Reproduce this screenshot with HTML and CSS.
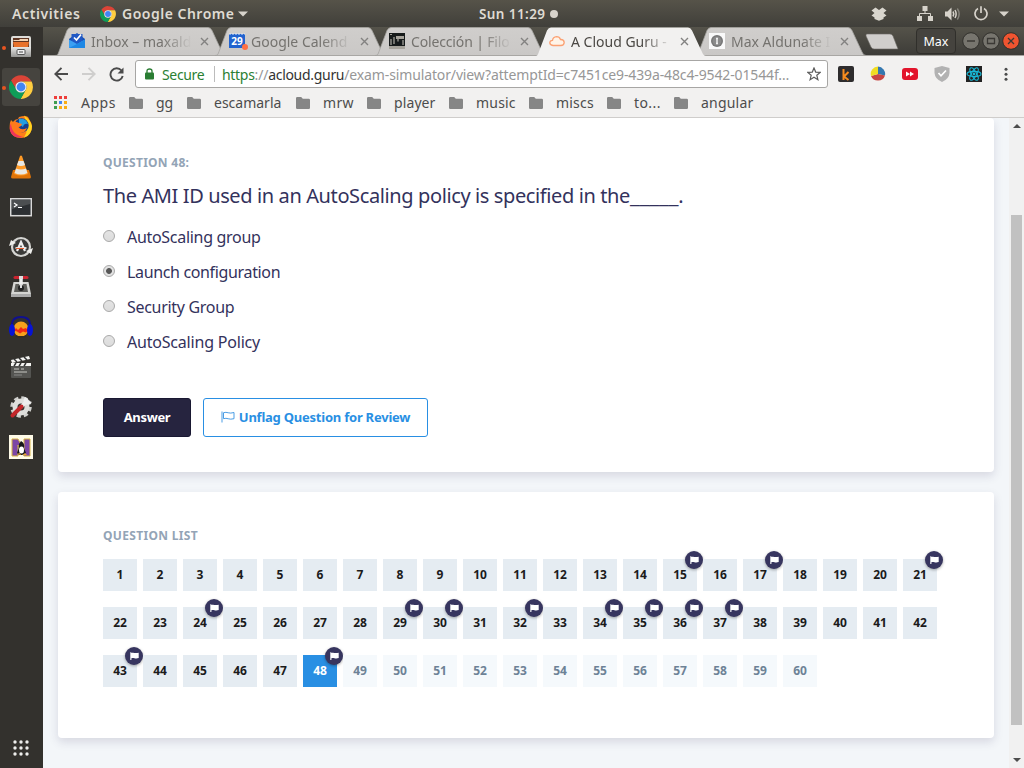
FILE: index.html
```html
<!DOCTYPE html>
<html lang="en">
<head>
<meta charset="utf-8">
<title>A Cloud Guru - Exam Simulator</title>
<link rel="stylesheet" href="styles.css">
</head>
<body>
<svg class="defs" width="0" height="0">
  <defs>
    <linearGradient id="inactive" x1="0" y1="0" x2="0" y2="1"><stop offset="0" stop-color="#d0cecc"/><stop offset="1" stop-color="#cac8c6"/></linearGradient>
    <linearGradient id="metal" x1="0" y1="0" x2="0" y2="1"><stop offset="0" stop-color="#e8e8e6"/><stop offset="1" stop-color="#969694"/></linearGradient>
    <symbol id="chrome" viewBox="0 0 24 24">
      <path fill="#db4437" d="M2 5.6A12 12 0 0 1 22.6 6.5H12A5.5 5.5 0 0 0 6.9 14Z"/>
      <path fill="#ffcd40" d="M22.6 6.5A12 12 0 0 1 11.6 24L16.8 14.8A5.5 5.5 0 0 0 12 6.5Z"/>
      <path fill="#0f9d58" d="M2 5.4A12 12 0 0 0 11.6 24L16.8 14.7A5.5 5.5 0 0 1 7.2 14.7Z"/>
      <circle cx="12" cy="12" r="5.6" fill="#f1f1f1"/><circle cx="12" cy="12" r="4.4" fill="#4285f4"/>
    </symbol>
    <symbol id="folder" viewBox="0 0 14 12"><path fill="#868686" d="M1.3 0H5.2L6.8 1.7H12.7Q14 1.7 14 3V10.7Q14 12 12.7 12H1.3Q0 12 0 10.7V1.3Q0 0 1.3 0Z"/></symbol>
    <symbol id="close" viewBox="0 0 9 9"><path d="M1 1 8 8M8 1 1 8" stroke="#838281" stroke-width="1.4"/></symbol>
    <symbol id="tab" viewBox="0 0 172 29"><path d="M0 28.5C3 28.5 3 27 4 24.500L12 3.500Q13.500 .5 16 .5H153Q155.500 .5 157 3.500L167 25Q168.500 28.500 171 28.500Z" fill="url(#inactive)" stroke="#a5a39f" stroke-width=".8"/></symbol>
    <symbol id="flag" viewBox="0 0 9 8"><path fill="#fff" d="M.3.2H1.300V.9C3.500.2 4.500 1.700 8.700.7V6C5 7.200 4 5.300 1.400 6.200V8H.3Z"/></symbol>
  </defs>
</svg>
<div class="desktop">
  <header class="panel">
    <span class="activities">Activities</span>
    <svg class="app-ico" width="16" height="16"><use href="#chrome"/></svg>
    <span class="app-name">Google Chrome</span>
    <svg class="caret" width="10" height="6" viewBox="0 0 10 6"><path d="M0 .5H10L5 5.500Z" fill="#d7d3cb"/></svg>
    <span class="clock">Sun 11:29</span><i class="dot"></i>
    <svg class="dropbox" width="16" height="14" viewBox="0 0 16 14"><path fill="#d9d6ce" d="M4.500.5 8 3 11.500.5 15.500 3.500 12.500 6 15.500 8.500 12.500 10.500V12L8 13.800 3.500 12V10.500L.5 8.500 3.500 6 .5 3.500Z"/></svg>
    <svg class="net" width="16" height="15" viewBox="0 0 16 15"><path fill="#d7d3cb" d="M5.500 0h5v5h-5zM0 10h5v5H0zM11 10h5v5h-5z"/><path d="M8 5V7.500M2.500 10V7.500H13.500V10" fill="none" stroke="#d7d3cb"/></svg>
    <svg class="vol" width="16" height="14" viewBox="0 0 16 14"><path fill="#d7d3cb" d="M0 4.500H2.500L6.500.5V13.500L2.500 9.500H0Z"/><path d="M8 4.500Q9.500 7 8 9.500M10 3Q12.300 7 10 11" fill="none" stroke="#d7d3cb" stroke-width="1.500"/><path d="M12.300 1.500Q16 7 12.300 12.500" fill="none" stroke="#85837b" stroke-width="1.500"/></svg>
    <svg class="power" width="14" height="15" viewBox="0 0 14 15"><path d="M4 2.500A6 6 0 1 0 10 2.500M7 .3V7" fill="none" stroke="#d7d3cb" stroke-width="1.700"/></svg>
    <svg class="caret2" width="10" height="6" viewBox="0 0 10 6"><path d="M0 .5H10L5 5.500Z" fill="#d7d3cb"/></svg>
  </header>
  <div class="workspace">
    <nav class="dock">
      <div class="app running"><svg width="22" height="24" viewBox="0 0 22 24"><rect x="1" y="1" width="20" height="21" rx="2" fill="#deddd9"/><rect x="3" y="3" width="16" height="9" fill="#5f3522"/><path d="M3.500 5H9L10 4H18V6H3.500Z" fill="#f4d3b3"/><path d="M3 7H19L18 12H4Z" fill="#e8722b"/><rect x="1" y="12" width="20" height="10" rx="1" fill="url(#metal)"/><rect x="7" y="14.500" width="8" height="5" rx="1" fill="#eee" stroke="#555"/><path d="M9 17H13" stroke="#444"/></svg></div>
      <div class="app running current"><svg width="24" height="24"><use href="#chrome"/></svg></div>
      <div class="app"><svg width="24" height="24" viewBox="0 0 24 24"><path fill="#ff7f18" d="M2 5 4 7Q6 4 9 4L10 2Q19-1 20 4Q24 9 22.500 15Q20 23 12 23Q3 23 1 15Q0 9 2 5Z"/><path fill="#ffd51f" d="M15 .5Q21 4 23 11Q23 20 15 22.500Q21 13 15 .5Z"/><circle cx="12.500" cy="10.500" r="7.200" fill="#14408f"/><path fill="#229ee0" d="M10 4Q17 3 19 9Q15 8 14 12L10 9Z"/><path fill="#ff7a1c" d="M3 7Q6 6 10 8L13 9Q12 12 9.500 12Q12 16 18 13Q15 20 8 17Q3 15 3 7Z"/><path fill="#f0355a" d="M2 8Q2 15 7 19Q10 21 14 22Q6 24 2 18Q-.5 14 2 8Z"/></svg></div>
      <div class="app"><svg width="22" height="24" viewBox="0 0 22 24"><path fill="#e07408" d="M3 15H19L21 22Q21 23.500 19 23.500H3Q1 23.500 1 22Z"/><path fill="#ff9a26" d="M10 1Q11 0 12 1L18 19Q11 22 4 19Z"/><path fill="#e9e8e4" d="M8.500 6H13.500L15 10Q11 12 7 10ZM6 13.500Q11 15.500 16 13.500L17.400 18Q11 21 4.600 18Z"/></svg></div>
      <div class="app"><svg width="22" height="19" viewBox="0 0 22 19"><rect x=".7" y=".7" width="20.600" height="17" fill="#2d3033" stroke="#d9d9d9" stroke-width="1.500"/><path fill="#4c4f51" d="M2 2H20V6L2 11Z"/><path d="M4 5 7 7 4 9M8 9.500H12" fill="none" stroke="#fff" stroke-width="1.200"/></svg></div>
      <div class="app"><svg width="24" height="24" viewBox="0 0 24 24"><circle cx="12" cy="12" r="9" fill="#3b3b39" stroke="#d5d5d2" stroke-width="2.200"/><path d="M0 11 2 5 7 8ZM24 13 22 19 17 16Z" fill="#eeeeeb"/><path d="M8 16 12 7 16 16" fill="none" stroke="#eee" stroke-width="2.200"/><path d="M6.500 13H17.500" stroke="#eee" stroke-width="1.800"/><path d="M7 13.500H15" stroke="#e65a2c"/></svg></div>
      <div class="app"><svg width="22" height="24" viewBox="0 0 22 24"><path fill="#d5d5d2" d="M3.500 7H18.500L21 19V22H1V19Z"/><path fill="#5f5f5b" d="M5.500 9H16.500L18 17H4Z"/><path fill="#aaa" d="M1 19H21V22H1Z"/><path d="M11 2V13" stroke="#eee" stroke-width="3.500"/><circle cx="11" cy="13" r="3" fill="#222"/><path d="M11 9V13" stroke="#ddd" stroke-width="2"/><path d="M5 2.500H17" stroke="#ca2430" stroke-width="3" stroke-linecap="round"/><path d="M9 2.500H13" stroke="#ddd" stroke-width="3"/></svg></div>
      <div class="app"><svg width="24" height="22" viewBox="0 0 24 22"><path d="M3 11Q2 1 12 1T21 11" fill="none" stroke="#10108f" stroke-width="2"/><circle cx="12" cy="13" r="7.500" fill="#f5a11c"/><path d="M5 14.500 7 12 9 14 12 11 14 13 17 12 19 14.500 17 16.500 14 15.500 11 17.500 8 15.500Z" fill="#f02816"/><ellipse cx="3" cy="14" rx="3" ry="6" fill="#0713d5"/><ellipse cx="21" cy="14" rx="3" ry="6" fill="#0713d5"/><path d="M6 20H18L16 21.500H8Z" fill="#332d20"/></svg></div>
      <div class="app"><svg width="22" height="23" viewBox="0 0 22 23"><rect x="1" y="10" width="20" height="12" rx="1" fill="#545451"/><path d="M1 7H21V10H1Z" fill="#f5f5f2"/><path d="M1 4 19 0 20 3 2 7Z" fill="#f5f5f2"/><path d="M4 3 7 6M9 2 12 5M14 1 17 4M6 7 4 10M11 7 9 10M16 7 14 10" stroke="#333" stroke-width="1.500"/><path d="M4 13H9M11 13H14M4 16H17" stroke="#c7c7c3"/><path d="M4 19H12" stroke="#888"/></svg></div>
      <div class="app"><svg width="24" height="24" viewBox="0 0 24 24"><circle cx="12" cy="12" r="9" fill="none" stroke="#d0d0cd" stroke-width="3.500" stroke-dasharray="4.200 2.870"/><circle cx="12" cy="12" r="6" fill="none" stroke="#dededb" stroke-width="5"/><path d="M12 12 18 6" stroke="#eee" stroke-width="3.500"/><path d="M16 2Q13 6 16 9Q20 11 23 7L20 6 18.500 3Z" fill="#eee"/><path d="M3.500 20.500 12.500 11.500" stroke="#c3272b" stroke-width="4" stroke-linecap="round"/></svg></div>
      <div class="app"><svg width="24" height="24" viewBox="0 0 24 24"><rect width="24" height="24" fill="#fffbe8"/><path d="M3 4H9L15 15V4H21V21H15L9 10V21H3Z" fill="#7c46a5" stroke="#d7b443"/><path d="M12 6Q16 8 15 13L17 18 13 20H10L8 18Q10 14 10 9Z" fill="#17171a"/><ellipse cx="12.500" cy="15" rx="2.500" ry="3.500" fill="#fff"/><path d="M8 19 11 18 12 20ZM14 20 16 18 18 20Z" fill="#e9a52c"/></svg></div>
      <svg class="launcher" width="16" height="16" viewBox="0 0 16 16" fill="#eeeeec"><circle cx="2" cy="2" r="1.700"/><circle cx="8" cy="2" r="1.700"/><circle cx="14" cy="2" r="1.700"/><circle cx="2" cy="8" r="1.700"/><circle cx="8" cy="8" r="1.700"/><circle cx="14" cy="8" r="1.700"/><circle cx="2" cy="14" r="1.700"/><circle cx="8" cy="14" r="1.700"/><circle cx="14" cy="14" r="1.700"/></svg>
    </nav>
    <main class="window">
      <div class="tabstrip">
        <div class="tab"><svg class="shape"><use href="#tab"/></svg><svg class="fav" width="16" height="16" viewBox="0 0 16 16"><path fill="#1550b5" d="M0 6 8 0 16 6V12H0Z"/><path fill="#2058c4" d="M2.500 1H13.500V9L8 12 2.500 9Z"/><path d="M5 4.500 7.500 7 12 1.500" fill="none" stroke="#fff" stroke-width="1.700"/><path fill="#3ba0f3" d="M0 6.500 8 11 16 6.500V15H0Z"/><path fill="#1e88e5" d="M0 15 8 11 16 6.500V15Z"/></svg><span class="title t1">Inbox – maxald</span><svg class="x" width="9" height="9"><use href="#close"/></svg></div>
        <div class="tab"><svg class="shape"><use href="#tab"/></svg><svg class="fav tall" width="19" height="18" viewBox="0 0 19 18"><rect y="2" width="16" height="14" fill="#2163cf"/><path d="M0 2H16" stroke="#dfe9f8" stroke-dasharray="2 1"/><text x="8" y="13" text-anchor="middle" class="cal">29</text><circle cx="16" cy="15" r="3" fill="#ff7043"/></svg><span class="title t2">Google Calend</span><svg class="x" width="9" height="9"><use href="#close"/></svg></div>
        <div class="tab"><svg class="shape"><use href="#tab"/></svg><svg class="fav" width="16" height="16" viewBox="0 0 16 16"><rect width="16" height="16" fill="#171b1b"/><path fill="#a7a49c" d="M0 13H16V16H0ZM7 3H15V6H7ZM1 1H3V2H1Z"/><path d="M2 6V12M5 4V11M9 6V9M14 7V12" stroke="#ccc9c0"/><path d="M8 10H13" stroke="#15191b" stroke-width="3"/></svg><span class="title t3">Colección | Filo</span><svg class="x" width="9" height="9"><use href="#close"/></svg></div>
        <div class="tab last"><svg class="shape"><use href="#tab"/></svg><svg class="fav" width="16" height="16" viewBox="0 0 16 16"><rect width="16" height="16" fill="#f9f9f9"/><circle cx="8" cy="8" r="6" fill="#777"/><circle cx="8" cy="8" r="4.500" fill="#8a8a8a"/><path d="M8 5V11M7 5.500H9M7 10.500H9" stroke="#eee" stroke-width="1.500"/></svg><span class="title t5">Max Aldunate I</span><svg class="x" width="9" height="9"><use href="#close"/></svg></div>
        <div class="tab active"><svg class="shape" viewBox="0 0 172 29"><path d="M0 29C3 29 3 27 4 24.500L12 3.500Q13.500 .5 16 .5H153Q155.500 .5 157 3.500L167 25Q168.500 29 171 29Z" fill="#f2f1f0"/></svg><svg class="fav" width="16" height="16" viewBox="0 0 16 16"><path d="M4 12.500Q.7 12 .8 9.500Q1 7.500 3.500 7.300Q4 4 7.500 3.700Q10.500 3.700 11.500 6.500Q15 6.300 15.200 9.500Q15 12.500 12 12.500Z" fill="#fff4e8" stroke="#fba173" stroke-width="1.300"/></svg><span class="title t4">A Cloud Guru -</span><svg class="x" width="9" height="9"><use href="#close"/></svg></div>
        <svg class="newtab" width="34" height="17" viewBox="0 0 34 17"><path d="M2 1H25Q27 1 28 3L33 16H9Q7 16 6 14L1 3Q.5 1 2 1Z" fill="#d0cecc" stroke="#6c6a65" stroke-width=".6"/></svg>
        <div class="user">Max</div>
        <svg class="wm" width="58" height="18" viewBox="0 0 58 18"><g stroke="#31302c"><circle cx="9" cy="9" r="8.300" fill="#77756e"/><circle cx="29" cy="9" r="8.300" fill="#77756e"/><circle cx="49" cy="9" r="8.300" fill="#f05430"/></g><path d="M5 9H13M25.500 6.500H32.500V11.500H25.500ZM46 6 52 12M52 6 46 12" fill="none" stroke="#3b3935" stroke-width="1.300"/></svg>
      </div>
      <div class="toolbar">
        <svg class="back" width="14" height="14" viewBox="0 0 14 14"><path d="M14 7H1.500M7.500 .8 1.300 7 7.500 13.200" fill="none" stroke="#4b4b4b" stroke-width="1.900"/></svg>
        <svg class="fwd" width="14" height="14" viewBox="0 0 14 14"><path d="M0 7H12.500M6.500 .8 12.700 7 6.500 13.200" fill="none" stroke="#cfcecd" stroke-width="1.900"/></svg>
        <svg class="reload" width="15" height="15" viewBox="0 0 15 15"><path d="M12.500 3.500A6.200 6.200 0 1 0 13.700 9" fill="none" stroke="#4b4b4b" stroke-width="1.900"/><path d="M14.500 .5V6.500H8.500Z" fill="#4b4b4b"/></svg>
        <div class="omnibox">
          <svg class="lock" width="9" height="12" viewBox="0 0 9 12"><path d="M2 5V3Q2 1 4.500 1T7 3V5" fill="none" stroke="#2a7d33" stroke-width="1.300"/><rect y="4.500" width="9" height="7" rx="1" fill="#2a7d33"/></svg>
          <span class="secure">Secure</span><i class="sep"></i>
          <span class="url"><span class="https">https</span><span class="dim">://</span><span class="host">acloud.guru</span><span class="dim path">/exam-simulator/view?attemptId=c7451ce9-439a-48c4-9542-01544f…</span></span>
          <svg class="star" width="14" height="14" viewBox="0 0 14 14"><path d="M7 1 8.700 5.100 13.200 5.400 9.800 8.300 10.900 12.700 7 10.300 3.100 12.700 4.200 8.300.8 5.400 5.300 5.100Z" fill="none" stroke="#5b5b5b" stroke-width="1.200"/></svg>
        </div>
        <div class="exts">
          <svg width="16" height="16" viewBox="0 0 16 16"><rect width="16" height="16" rx="2" fill="#2e2c2d"/><path d="M5.500 3V14M10.500 6 6 10.500 10.500 14" fill="none" stroke="#f68b1e" stroke-width="2"/></svg>
          <svg width="16" height="16" viewBox="0 0 16 16"><path d="M8 8V.5A7.500 7.500 0 0 1 15 9.500Z" fill="#3578b0"/><path d="M8 8 15 9.500A7.500 7.500 0 0 1 1 10Z" fill="#c84643"/><path d="M8 8 1 10A7.500 7.500 0 0 1 8 .5Z" fill="#f0dc22"/></svg>
          <svg width="16" height="16" viewBox="0 0 16 16"><rect y="2" width="16" height="12" rx="3" fill="#e2142c"/><path d="M4 5.500 8 8 4 10.500ZM8 5.500 12 8 8 10.500Z" fill="#fff"/></svg>
          <svg width="16" height="16" viewBox="0 0 16 16"><path d="M8 0 15.500 2V7Q15 13 8 16Q1 13 .5 7V2Z" fill="#b2b2b2"/><path d="M4.500 7 7 9.800 12 4.500" fill="none" stroke="#fff" stroke-width="1.700"/></svg>
          <svg width="16" height="16" viewBox="0 0 16 16"><rect width="16" height="16" fill="#222"/><g fill="none" stroke="#18b8d6" stroke-width="1.100"><ellipse cx="8" cy="8" rx="7" ry="2.600"/><ellipse cx="8" cy="8" rx="7" ry="2.600" transform="rotate(60 8 8)"/><ellipse cx="8" cy="8" rx="7" ry="2.600" transform="rotate(120 8 8)"/></g><circle cx="8" cy="8" r="1.400" fill="#18b8d6"/></svg>
          <svg width="16" height="16" viewBox="0 0 16 16" fill="#4b4b4b"><circle cx="8" cy="3.200" r="1.500"/><circle cx="8" cy="8.200" r="1.500"/><circle cx="8" cy="13.200" r="1.500"/></svg>
        </div>
      </div>
      <div class="bookmarks">
        <svg class="apps" width="14" height="14" viewBox="0 0 14 14"><path fill="#ee3e3a" d="M0 0h3v3H0zM5 0h3v3H5zM10 0h3v3h-3z"/><path fill="#3f9d51" d="M0 5h3v3H0zM0 10h3v3H0z"/><path fill="#4285f4" d="M5 5h3v3H5z"/><path fill="#f9ad15" d="M10 5h3v3h-3zM5 10h3v3H5zM10 10h3v3h-3z"/></svg>
        <span class="b0">Apps</span>
        <span class="bm b1"><svg width="14" height="12"><use href="#folder"/></svg><span>gg</span></span>
        <span class="bm b2"><svg width="14" height="12"><use href="#folder"/></svg><span>escamarla</span></span>
        <span class="bm b3"><svg width="14" height="12"><use href="#folder"/></svg><span>mrw</span></span>
        <span class="bm b4"><svg width="14" height="12"><use href="#folder"/></svg><span>player</span></span>
        <span class="bm b5"><svg width="14" height="12"><use href="#folder"/></svg><span>music</span></span>
        <span class="bm b6"><svg width="14" height="12"><use href="#folder"/></svg><span>miscs</span></span>
        <span class="bm b7"><svg width="14" height="12"><use href="#folder"/></svg><span class="dots">to...</span></span>
        <span class="bm b8"><svg width="14" height="12"><use href="#folder"/></svg><span>angular</span></span>
      </div>
      <div class="viewport">
        <div class="page">
          <section class="card question">
            <h2 class="label l1">QUESTION 48:</h2>
            <p class="prompt"><span>The AMI ID used in an AutoScaling policy is specified in the</span><span class="blank">_____</span>.</p>
            <div class="option"><i class="radio"></i><span>AutoScaling group</span></div>
            <div class="option"><i class="radio on"></i><span class="o2">Launch configuration</span></div>
            <div class="option"><i class="radio"></i><span>Security Group</span></div>
            <div class="option"><i class="radio"></i><span class="o4">AutoScaling Policy</span></div>
            <div class="actions">
              <div class="btn answer">Answer</div>
              <div class="btn unflag"><svg width="14" height="12" viewBox="0 0 14 12"><path d="M1 .5V11.500M2.500 1.700C6 .3 8 3.300 13 1.500V7.700C8 9.300 6 6.200 2.500 7.700Z" fill="none" stroke="#4b9de5"/></svg><span>Unflag Question for Review</span></div>
            </div>
          </section>
          <section class="card list">
            <h2 class="label l2">QUESTION LIST</h2>
            <div class="grid">
              <b>1</b><b>2</b><b>3</b><b>4</b><b>5</b><b>6</b><b>7</b><b>8</b><b>9</b><b>10</b><b>11</b><b>12</b><b>13</b><b>14</b>
              <b>15<i class="flag"><svg><use href="#flag"/></svg></i></b><b>16</b>
              <b>17<i class="flag"><svg><use href="#flag"/></svg></i></b><b>18</b><b>19</b><b>20</b>
              <b>21<i class="flag"><svg><use href="#flag"/></svg></i></b><b>22</b><b>23</b>
              <b>24<i class="flag"><svg><use href="#flag"/></svg></i></b><b>25</b><b>26</b><b>27</b><b>28</b>
              <b>29<i class="flag"><svg><use href="#flag"/></svg></i></b>
              <b>30<i class="flag"><svg><use href="#flag"/></svg></i></b><b>31</b>
              <b>32<i class="flag"><svg><use href="#flag"/></svg></i></b><b>33</b>
              <b>34<i class="flag"><svg><use href="#flag"/></svg></i></b>
              <b>35<i class="flag"><svg><use href="#flag"/></svg></i></b>
              <b>36<i class="flag"><svg><use href="#flag"/></svg></i></b>
              <b>37<i class="flag"><svg><use href="#flag"/></svg></i></b><b>38</b><b>39</b><b>40</b><b>41</b><b>42</b>
              <b>43<i class="flag"><svg><use href="#flag"/></svg></i></b><b>44</b><b>45</b><b>46</b><b>47</b>
              <b class="now">48<i class="flag"><svg><use href="#flag"/></svg></i></b>
              <b class="todo">49</b><b class="todo">50</b><b class="todo">51</b><b class="todo">52</b><b class="todo">53</b><b class="todo">54</b><b class="todo">55</b><b class="todo">56</b><b class="todo">57</b><b class="todo">58</b><b class="todo">59</b><b class="todo">60</b>
            </div>
          </section>
        </div>
        <div class="scrollbar">
          <svg width="8" height="4" viewBox="0 0 8 4"><path d="M0 4 4 0 8 4Z" fill="#4d4d4d"/></svg>
          <i class="thumb"></i>
          <svg width="8" height="4" viewBox="0 0 8 4"><path d="M0 0 4 4 8 0Z" fill="#4d4d4d"/></svg>
        </div>
      </div>
    </main>
  </div>
</div>
</body>
</html>
```
FILE: styles.css
```css
* { box-sizing: border-box; }
body { margin: 0; font-family: "Noto Sans", "Open Sans", sans-serif; }
svg { display: block; flex: none; }
.defs { position: absolute; }
.desktop { width: 1024px; height: 768px; overflow: hidden; display: flex; flex-direction: column; white-space: nowrap; }

.panel { height: 27px; flex: none; display: flex; align-items: center; background: linear-gradient(#565349, #403f3a); color: #dfdbd2; font-weight: 600; font-size: 14px; padding-left: 12px; }
.activities { width: 88px; letter-spacing: 0.6px; }
.app-name { margin-left: 6px; width: 116px; letter-spacing: 0.5px; }
.clock { margin-left: 231px; width: 71px; font-size: 13.5px; letter-spacing: 0.4px; }
.dot { width: 8px; height: 8px; border-radius: 50%; background: #d7d3cb; }
.dropbox { margin-left: 313px; }
.net { margin-left: 30px; }
.vol { margin-left: 12px; }
.power { margin-left: 13px; }
.caret2 { margin-left: 11px; }

.workspace { flex: 1; display: flex; min-height: 0; }
.dock { width: 43px; flex: none; background: #33312d; display: flex; flex-direction: column; align-items: center; position: relative; }
.app { width: 38px; height: 38px; margin: 1px 2px 1px 1px; flex: none; display: flex; align-items: center; justify-content: center; border-radius: 3px; position: relative; }
.app.current { background: #46443f; }
.app.running::before { content: ""; position: absolute; left: 0; top: 18px; width: 4px; height: 4px; border-radius: 50%; background: #e95420; }
.launcher { margin: auto 1px 12px 0; }

.window { flex: 1; min-width: 0; display: flex; flex-direction: column; background: #f2f1f0; }
.tabstrip { height: 29px; flex: none; padding-left: 12px; display: flex; align-items: center; background: linear-gradient(#55534a, #3d3c38); font-size: 14px; color: #75736f; border-bottom: 1px solid #a5a39f; position: relative; }
.tab { position: relative; width: 160px; height: 29px; flex: none; display: flex; align-items: center; padding-left: 14px; }
.tab.active { order: 4; color: #4b4844; z-index: 2; }
.tab.last { order: 5; }
.shape { position: absolute; left: 0; top: 0; width: 172px; height: 29px; }
.fav { position: relative; width: 16px; height: 16px; }
.fav.tall { width: 19px; height: 18px; margin-right: -3px; }
.cal { font: bold 10px "Noto Sans", sans-serif; fill: #fff; }
.title { position: relative; width: 101px; margin-left: 6px; overflow: hidden; -webkit-mask-image: linear-gradient(90deg, #000 70%, transparent 100%); mask-image: linear-gradient(90deg, #000 70%, transparent 100%); }
.t3 { letter-spacing: -0.15px; }
.x { position: relative; margin-left: 8px; }
.newtab { order: 6; margin-left: 10px; }
.user { order: 7; margin-left: 17px; width: 40px; height: 26px; border-radius: 4px; border: 1px solid #302f2b; background: #45433e; color: #fff; font-size: 12.5px; line-height: 26px; text-align: center; }
.wm { order: 8; margin-left: 6px; }

.toolbar { height: 36px; flex: none; display: flex; align-items: center; padding-left: 11px; }
.fwd { margin-left: 14px; }
.reload { margin-left: 13px; }
.omnibox { margin-left: 11px; width: 693px; height: 28px; border: 1px solid #a7a6a4; border-radius: 3px; background: #fff; display: flex; align-items: center; padding-left: 9px; font-size: 14px; }
.secure { margin-left: 8px; width: 52px; color: #2b8033; letter-spacing: -0.35px; }
.sep { width: 1px; height: 16px; background: #bcbcbc; }
.url { width: 578px; margin-left: 7px; letter-spacing: -0.2px; }
.path { letter-spacing: -0.13px; }
.https { color: #2b8033; }
.host { color: #333; }
.dim { color: #979797; }
.host, .https { letter-spacing: -0.3px; }
.star { margin-left: 7px; }
.exts { display: flex; gap: 16px; margin-left: 10px; }

.bookmarks { height: 26px; flex: none; position: relative; display: flex; align-items: center; padding: 0 0 4px 11px; border-bottom: 1px solid #cfcdcb; font-size: 14px; color: #4c4c4c; }
.b0 { margin-left: 13px; width: 48px; letter-spacing: 0.5px; }
.bm { display: flex; align-items: center; gap: 13px; flex: none; }
.b1 { width: 58px; } .b2 { width: 109px; } .b3 { width: 71px; letter-spacing: 0.3px; } .b4 { width: 82px; letter-spacing: 0.1px; }
.b5 { width: 80px; letter-spacing: 0.2px; } .b6 { width: 78px; letter-spacing: 0.2px; } .b7 { width: 67px; }
.dots { letter-spacing: 0.4px; }
.b8 { letter-spacing: 0.2px; }

.viewport { flex: 1; min-height: 0; display: flex; }
.page { flex: 1; min-width: 0; background: #f3f6f9; padding: 0 15px; color: #33325c; overflow: hidden; }
.card { background: #fff; box-shadow: 0 4px 10px rgba(51, 50, 92, 0.15); padding: 0 45px; border-radius: 4px; }
.question { height: 354px; padding-top: 36px; }
.list { height: 246px; margin-top: 20px; padding-top: 35px; }
.label { margin: 0; font-size: 12px; line-height: 18px; font-weight: 700; color: #93a4b6; }
.l1 { letter-spacing: 0.27px; }
.l2 { letter-spacing: 0.33px; }
.prompt { margin: 10px 0 9px; height: 28px; line-height: 28px; font-size: 20px; letter-spacing: -0.385px; }
.blank { font-size: 22px; line-height: 20px; letter-spacing: -0.1px; }
.option { height: 35px; display: flex; align-items: center; font-size: 16px; letter-spacing: -0.3px; }
.option .o2 { letter-spacing: -0.35px; }
.option .o4 { letter-spacing: -0.2px; }
.radio { width: 12px; height: 12px; margin: -1px 12px 0 0; flex: none; border: 1px solid #a9a9a9; border-radius: 50%; background: linear-gradient(#e4e4e4, #dcdcdc); }
.radio.on { background: radial-gradient(circle, #575757 0 2.5px, #e2e2e2 3.3px); }
.actions { margin-top: 39px; display: flex; gap: 12px; font-size: 13px; font-weight: 700; }
.btn { height: 39px; border-radius: 3px; display: flex; align-items: center; justify-content: center; padding-bottom: 2px; }
.answer { width: 88px; background: #26243f; color: #fff; border: 1px solid #191832; letter-spacing: -0.35px; }
.unflag { width: 225px; border: 1px solid #298fe3; color: #298fe3; gap: 4px; letter-spacing: -0.23px; }
.grid { margin-top: 14px; display: grid; grid-template-columns: repeat(21, 34px); grid-auto-rows: 32px; gap: 16px 6px; font-size: 12px; }
.grid b { position: relative; background: #e5ecf2; color: #1b1b1b; text-align: center; line-height: 32px; }
.grid .now { background: #298fe3; color: #fff; }
.grid .todo { background: #f5f9fc; color: #6d8296; }
.flag { position: absolute; right: -6px; top: -8px; width: 18px; height: 18px; border-radius: 50%; background: #37355f; box-shadow: 0 1px 3px rgba(0, 0, 0, 0.35); display: flex; align-items: center; justify-content: center; }
.flag svg { width: 9px; height: 8px; }
.scrollbar { width: 15px; flex: none; background: #f1f1f1; display: flex; flex-direction: column; align-items: center; padding: 6px 0; }
.thumb { width: 11px; height: 510px; background: #c1c1c1; margin: 87px 0 auto 0; }
```
